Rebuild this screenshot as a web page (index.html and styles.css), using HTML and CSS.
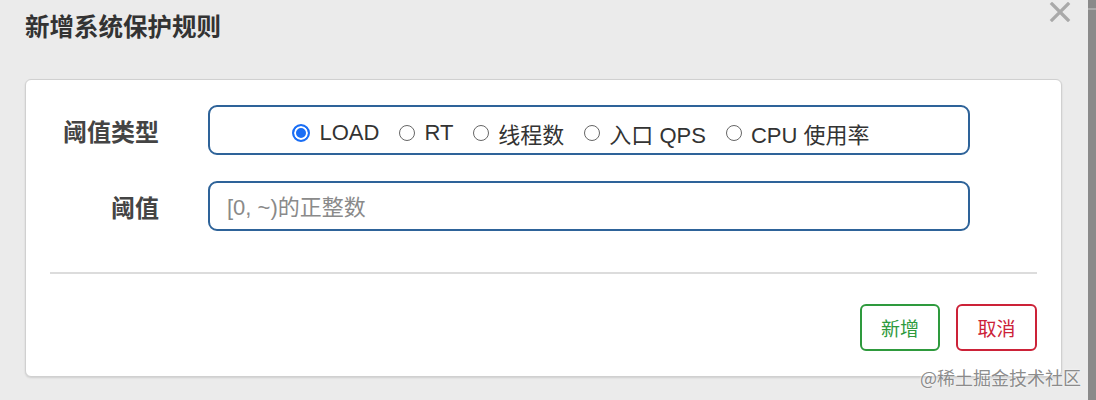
FILE: index.html
```html
<!DOCTYPE html>
<html lang="zh-CN">
<head>
    <meta charset="UTF-8">
    <title>新增系统保护规则</title>
    <link rel="stylesheet" href="styles.css">
</head>
<body>
    <div class="dialog">
        <div class="dialog-header">
            <h4 class="dialog-title">新增系统保护规则</h4>
            <button class="close" aria-label="关闭">
                <svg width="22" height="20" viewBox="0 0 22 20"><path d="M3 2 L19 18 M19 2 L3 18" stroke="#a9a9a9" stroke-width="3.2" stroke-linecap="square"/></svg>
            </button>
        </div>
        <div class="card">
            <div class="form-row">
                <label class="form-label">阈值类型</label>
                <div class="radio-group">
                    <label class="radio"><span class="dot checked"></span>LOAD</label>
                    <label class="radio"><span class="dot"></span>RT</label>
                    <label class="radio"><span class="dot"></span>线程数</label>
                    <label class="radio"><span class="dot"></span>入口 QPS</label>
                    <label class="radio"><span class="dot"></span>CPU 使用率</label>
                </div>
            </div>
            <div class="form-row">
                <label class="form-label">阈值</label>
                <input type="text" class="input-field" placeholder="[0, ~)的正整数">
            </div>
            <hr class="divider">
            <div class="actions">
                <button class="btn btn-add">新增</button>
                <button class="btn btn-cancel">取消</button>
            </div>
        </div>
    </div>
    <div class="scrollbar"></div>
    <div class="watermark">@稀土掘金技术社区</div>
</body>
</html>
```

FILE: styles.css
```css
body {
    margin: 0;
    height: 400px;
    overflow: hidden;
    display: flex;
    background-color: #ebebeb;
    font-family: "Liberation Sans", "Noto Sans CJK SC", sans-serif;
    color: #333;
}
.dialog {
    flex: 1;
    padding: 0 26px 0 25px;
}
.dialog-header {
    display: flex;
    justify-content: space-between;
    align-items: flex-start;
    height: 79px;
    margin-right: -9px;
}
.dialog-title {
    margin: 0;
    padding-top: 12px;
    font-size: 24.5px;
    line-height: 32px;
    font-weight: bold;
    color: #333;
}
.close {
    margin-top: 2px;
    padding: 0;
    background: none;
    border: none;
    cursor: pointer;
}
.card {
    background-color: #fff;
    border: 1px solid #d0d0d0;
    border-radius: 6px;
    box-shadow: 0 1px 2px rgba(0,0,0,0.12);
    padding: 25px 24px 25px 0;
    height: 298px;
    box-sizing: border-box;
}
.form-row {
    display: grid;
    grid-template-columns: 133px 762px;
    column-gap: 49px;
    align-items: center;
    margin-bottom: 26px;
}
.form-label {
    text-align: right;
    font-size: 24px;
    font-weight: bold;
    color: #444;
}
.radio-group {
    height: 50px;
    box-sizing: border-box;
    border: 2px solid #2e6399;
    border-radius: 9px;
    display: flex;
    justify-content: center;
    align-items: center;
    gap: 20px;
    padding: 5px 16px 0 0;
}
.radio {
    display: flex;
    align-items: center;
    gap: 9px;
    font-size: 22px;
    color: #333;
}
.dot {
    width: 14px;
    height: 14px;
    border: 1px solid #666;
    border-radius: 50%;
    box-sizing: content-box;
}
.dot.checked {
    width: 14px;
    height: 14px;
    border: 2px solid #1a6ef5;
    background-color: #1a6ef5;
    box-shadow: inset 0 0 0 2px #fff;
}
.input-field {
    height: 50px;
    box-sizing: border-box;
    border: 2px solid #2e6399;
    border-radius: 9px;
    padding: 4px 17px 0;
    font-family: "Liberation Sans", "Noto Sans CJK SC", sans-serif;
    font-size: 22px;
    color: #333;
}
.input-field::placeholder {
    color: #8a8a8a;
}
.divider {
    margin: 41px 0 30px 24px;
    border: none;
    border-top: 2px solid #dcdcdc;
}
.actions {
    display: flex;
    justify-content: flex-end;
    gap: 16px;
}
.btn {
    width: 81px;
    height: 47px;
    background-color: #fff;
    border-radius: 6px;
    font-family: "Noto Sans CJK SC", sans-serif;
    font-size: 19px;
    cursor: pointer;
}
.btn-add {
    width: 80px;
    border: 2px solid #2e9a3d;
    color: #2e9a3d;
}
.btn-cancel {
    border: 2px solid #cc2238;
    color: #cc2238;
}
.scrollbar {
    width: 8px;
    background: linear-gradient(#8a8a8a 8px, #aaaaaa 8px, #aaaaaa 10px, #8a8a8a 10px);
}
.watermark {
    position: absolute;
    right: 15px;
    bottom: 12px;
    font-family: "Noto Sans CJK SC", sans-serif;
    font-size: 18px;
    line-height: 22px;
    color: rgba(110,110,110,0.8);
    text-shadow: 0 0 2px #fff;
}
```
